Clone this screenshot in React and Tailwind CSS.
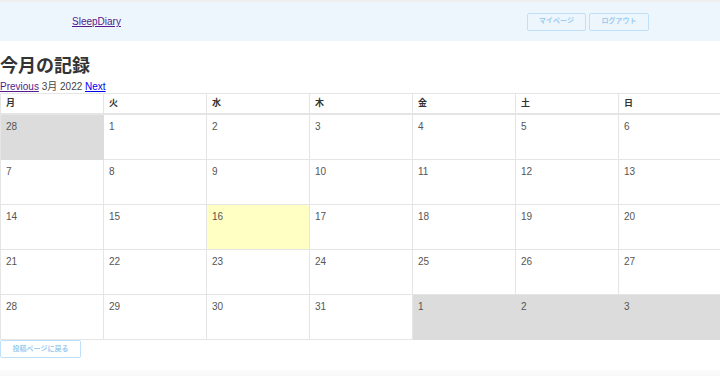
const days = ['月', '火', '水', '木', '金', '土', '日']

const cells = [
  [28, 'out'], [1], [2], [3], [4], [5], [6],
  [7], [8], [9], [10], [11], [12], [13],
  [14], [15], [16, 'today'], [17], [18], [19], [20],
  [21], [22], [23], [24], [25], [26], [27],
  [28], [29], [30], [31], [1, 'out'], [2, 'out'], [3, 'out'],
]

export default function App() {
  return (
    <div className="w-[720px] h-[376px] overflow-hidden bg-white text-[#333] font-['Helvetica','Liberation_Sans','Noto_Sans_CJK_JP',sans-serif]">
      {/* header */}
      <div className="border-t-2 border-[#efefef] bg-[#eef6fd] h-[41px] flex items-center">
        <a href="#" className="ml-[72px] text-[10px] text-[#551a8b] underline">SleepDiary</a>
        <div className="ml-auto mr-[71px] flex gap-[3px]">
          <button className="w-[59px] h-[18px] rounded-[2px] border border-[#bfe0f8] text-[7px] text-[#9ccdf0] font-bold">マイページ</button>
          <button className="w-[60px] h-[18px] rounded-[2px] border border-[#bfe0f8] text-[7px] text-[#9ccdf0] font-bold">ログアウト</button>
        </div>
      </div>

      <h1 className="mt-[13px] text-[18px] leading-[24px] font-bold text-[#333]">今月の記録</h1>
      <div className="mt-[2px] text-[10px] leading-[13px] text-[#444]">
        <a href="#" className="text-[#551a8b] underline">Previous</a>
        <span> 3月 2022 </span>
        <a href="#" className="text-[#0000ee] underline">Next</a>
      </div>

      {/* calendar */}
      <div className="w-[722px] grid grid-cols-[repeat(7,103px)] border-t border-l border-[#e5e5e5]">
        {days.map((d) => (
          <div key={d} className="h-[21px] border-r border-b-2 border-[#e5e5e5] pl-[5px] flex items-center text-[9px] font-bold text-[#333]">
            {d}
          </div>
        ))}
        {cells.map(([n, kind], i) => (
          <div
            key={i}
            className={
              'h-[45px] border-r border-b pl-[5px] pt-[6px] text-[10px] leading-[12px] text-[#555] ' +
              (kind === 'out' ? 'bg-[#dcdcdc] border-[#dcdcdc]' : kind === 'today' ? 'bg-[#ffffc4] border-[#e5e5e5]' : 'bg-white border-[#e5e5e5]')
            }
          >
            {n}
          </div>
        ))}
      </div>

      <button className="block w-[81px] h-[18px] rounded-[2px] border border-[#bfe0f8] text-[7px] text-[#9ccdf0] font-bold">投稿ページに戻る</button>

      <div className="mt-[12px] h-[10px] bg-gradient-to-b from-[#fbfbfb] to-[#f5f5f5]"></div>
    </div>
  )
}
